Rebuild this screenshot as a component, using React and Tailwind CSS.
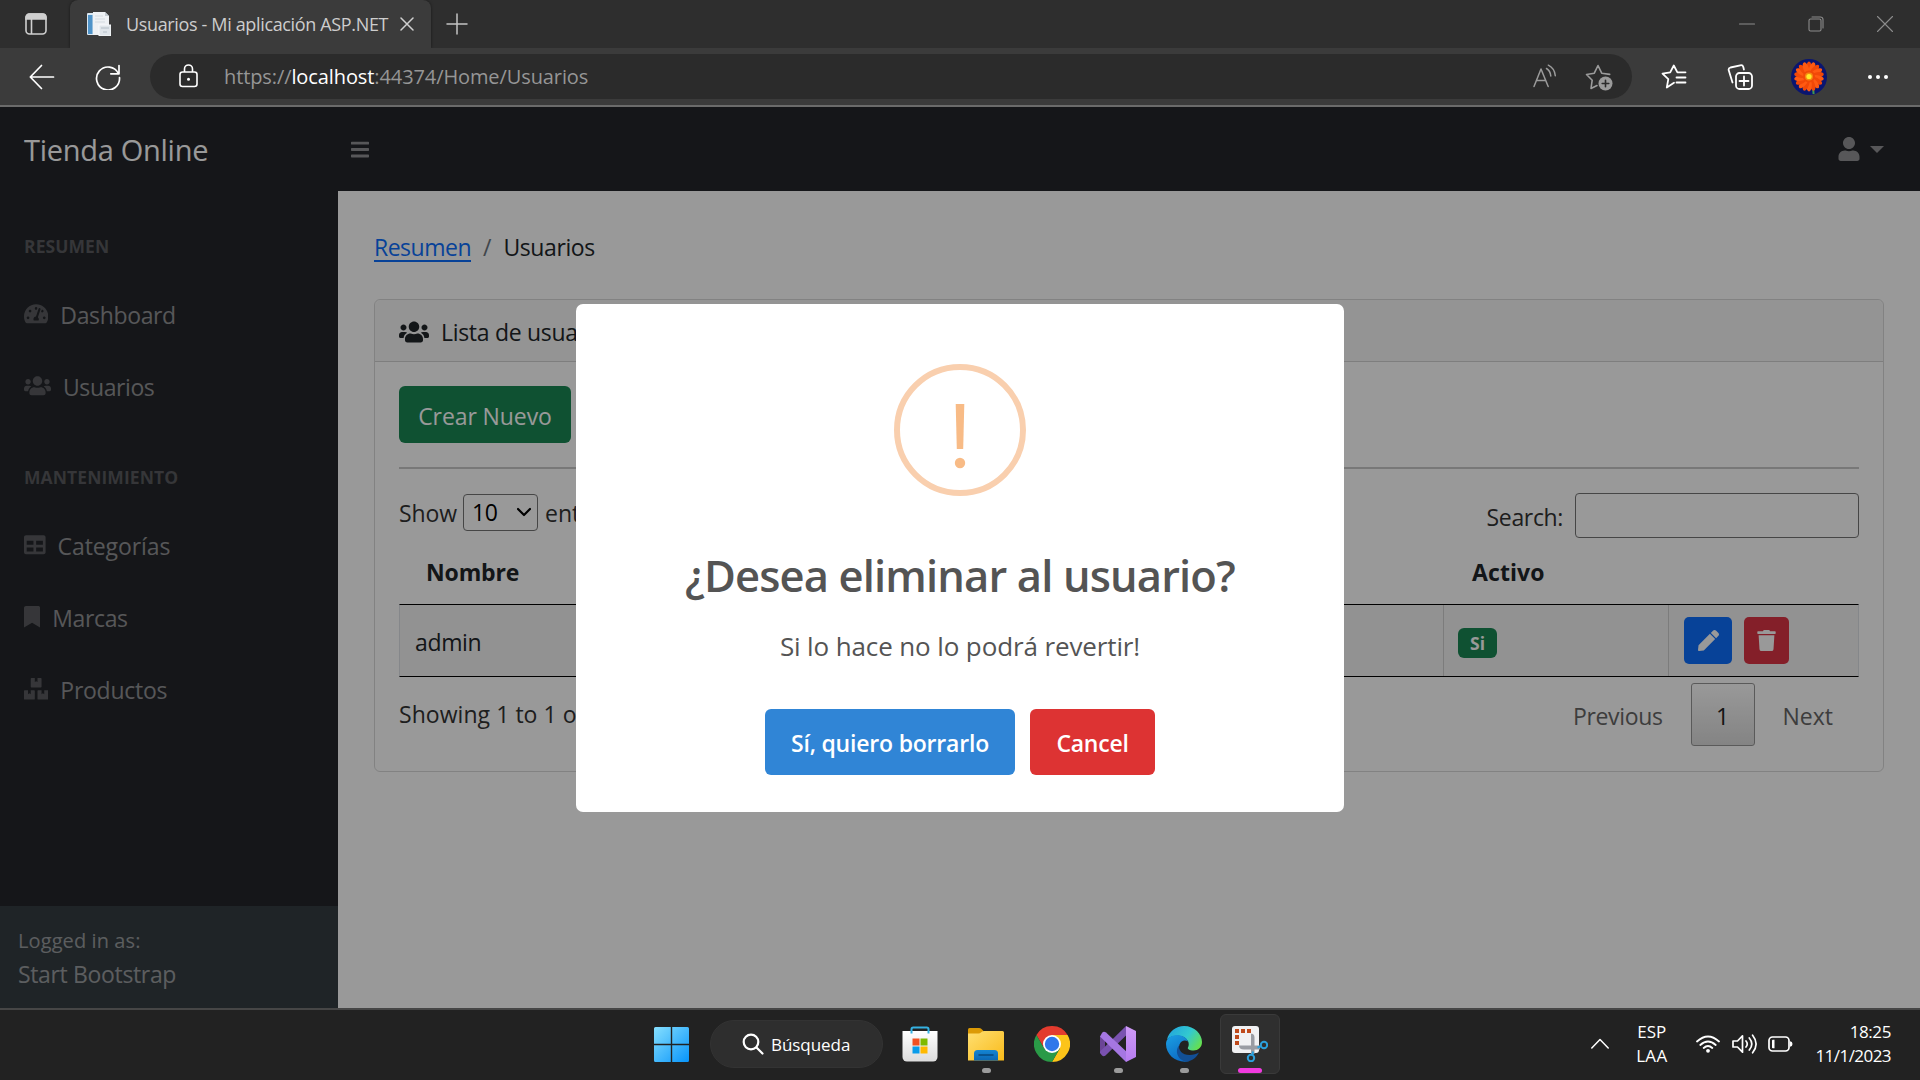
import {
  FaTachometerAlt,
  FaUsers,
  FaTable,
  FaBookmark,
  FaBoxes,
  FaBars,
  FaUser,
  FaTrash,
  FaPen,
} from 'react-icons/fa';

function Stroke({ className, children, w = 1.6, size = 24 }) {
  return (
    <svg
      viewBox={`0 0 ${size} ${size}`}
      className={className}
      fill="none"
      stroke="currentColor"
      strokeWidth={w}
      strokeLinecap="round"
      strokeLinejoin="round"
    >
      {children}
    </svg>
  );
}

function TabBar() {
  return (
    <div className="flex h-12 bg-[#2e2e2e]">
      <div className="flex w-[70px] items-center pl-[25px]">
        <svg viewBox="0 0 22 22" className="size-[22px] text-[#cfcfcf]" fill="none" stroke="currentColor" strokeWidth="1.6">
          <rect x="1" y="1" width="20" height="20" rx="3.5" />
          <path d="M1 6V4.5C1 2.5 2.5 1 4.5 1h13C19.5 1 21 2.5 21 4.500V6z" fill="currentColor" />
          <path d="M6.500 6v15" />
        </svg>
      </div>
      <div className="flex w-[361px] items-center rounded-t-lg bg-[#3b3b3b] pl-[17px] shadow-[0_0_3px_rgba(0,0,0,0.5)]">
        <svg viewBox="0 0 24 24" className="size-6 shrink-0">
          <rect x="0" y="1" width="9" height="22" rx="1" fill="#dbe7f1" />
          <rect x="1" y="3" width="4.500" height="19" fill="#4f93c8" />
          <path d="M6 0h12l4 4v19H6z" fill="#eef1f4" />
          <path d="M18 0l4 4h-4z" fill="#c3cbd2" />
          <path d="M8 4h8M8 7h10M8 10h10" stroke="#d3dae0" />
          <rect x="12" y="13" width="12" height="11" fill="#dfe5ea" stroke="#f8fafb" strokeWidth="1" />
          <path d="M14 16h8M16 20h4" stroke="#b4bec7" />
        </svg>
        <span className="ml-[15px] w-[270px] whitespace-nowrap text-[18px] tracking-[-0.35px] text-[#cdcdcd]">
          Usuarios - Mi aplicación ASP.NET
        </span>
        <Stroke className="ml-[4px] size-[14px] shrink-0 text-[#d0d0d0]" w={1.5} size={14}>
          <path d="M1 1l12 12M13 1L1 13" />
        </Stroke>
      </div>
      <div className="flex flex-1 items-center pl-[15px]">
        <Stroke className="size-[22px] text-[#c4c4c4]" w={1.5} size={22}>
          <path d="M11 1v20M1 11h20" />
        </Stroke>
      </div>
      <div className="flex items-center gap-[53px] pr-[27px] text-[#8c8c8c]">
        <Stroke className="size-4" w={1.1} size={16}>
          <path d="M0.500 8h15" />
        </Stroke>
        <Stroke className="size-4" w={1.1} size={16}>
          <rect x="1" y="3" width="12" height="12" rx="1.500" />
          <path d="M4 1h8.500a2.500 2.500 0 0 1 2.500 2.500V12" />
        </Stroke>
        <Stroke className="size-4" w={1.1} size={16}>
          <path d="M0.500 0.500l15 15M15.500 0.500l-15 15" />
        </Stroke>
      </div>
    </div>
  );
}

const PETALS = Array.from({ length: 18 }, (_, i) => i * 20);

function Avatar() {
  return (
    <svg viewBox="0 0 36 36" className="size-9">
      <circle cx="18" cy="18" r="18" fill="#0a1570" />
      <path d="M22 28l.6 7" stroke="#3f9a4e" strokeWidth="2" />
      {PETALS.map((a) => (
        <ellipse key={a} cx="18" cy="9" rx="2.800" ry="6.500" fill={a % 40 ? '#ff5a12' : '#f24808'} transform={`rotate(${a} 18 17.500)`} />
      ))}
      <circle cx="18" cy="17.500" r="6" fill="#f04a08" />
      <circle cx="18" cy="17.500" r="4" fill="#f58a10" />
      <circle cx="18" cy="17.500" r="2.600" fill="#ffe92a" />
    </svg>
  );
}

function Toolbar() {
  return (
    <div className="flex h-[59px] items-center border-b-2 border-[#6b6b6b] bg-[#3b3b3b] text-white">
      <Stroke className="ml-[29px] size-[26px]" w={1.7} size={26}>
        <path d="M24.500 13H1.500M12.500 1.500L1.300 13l11.200 11.500" />
      </Stroke>
      <Stroke className="ml-[40px] size-[26px]" w={1.7} size={26}>
        <path d="M23.400 9.500A11.500 11.500 0 1 0 24.500 13.500M24 1.500v8.300h-8.200" />
      </Stroke>
      <div className="ml-[29px] flex h-[45px] w-[1482px] items-center rounded-full bg-[#2b2b2b]">
        <svg viewBox="0 0 19 24" className="ml-[29px] -mt-px h-6 w-[19px]" fill="none" stroke="currentColor" strokeWidth="1.600">
          <rect x="1" y="8" width="17" height="14.500" rx="2.500" />
          <path d="M5.500 8V5a4 4 0 0 1 8 0v3" />
          <circle cx="9.500" cy="15.300" r="1.500" fill="currentColor" stroke="none" />
        </svg>
        <span className="ml-[26px] text-[20px] tracking-[-0.1px] text-[#969696]">
          https://<span className="text-white">localhost</span>:44374/Home/Usuarios
        </span>
        <div className="ml-auto flex items-center gap-[27px] pr-[21px] text-[#9b9b9b]">
          <Stroke className="size-[26px]" w={1.5} size={26}>
            <path d="M2 22.500L9 5l7.200 17.500M4.500 16.500h9.200M14.500 4.500c2.500 1.500 4 4 4.300 7.500M16.300 1.200c4 2 6.500 5.500 7 10.500" />
          </Stroke>
          <svg viewBox="0 0 28 28" className="-mr-[2px] size-7" fill="none" stroke="currentColor" strokeWidth="1.600" strokeLinejoin="round" strokeLinecap="round">
            <path d="M12 22.500l-6 3 1.200-8.300L1.500 11.500 9.300 10.200 13 2.500l3.700 7.700 8 1.200" />
            <circle cx="20.500" cy="20.500" r="7" fill="currentColor" stroke="none" />
            <path d="M20.500 17.200v6.600M17.200 20.500h6.600" stroke="#2b2b2b" />
          </svg>
        </div>
      </div>
      <Stroke className="ml-[29px] size-[26px]" w={1.8} size={26}>
        <path d="M13 18.800L5.800 23.500l1.500-8.300L1.500 9.600l7.700-1.300L12.800 1.500l3.600 6.800h8.100M15.500 13.500h9M15.500 18.500h9" />
      </Stroke>
      <Stroke className="ml-[40px] size-[26px]" w={1.8} size={26}>
        <path d="M5.500 18.500L1.800 6.500C1.300 5 2 4 3.500 3.500l9.800-2.200c1.500-.3 2.600.3 3 1.700l.6 2.500" />
        <rect x="9" y="9" width="16" height="16" rx="3.500" />
        <path d="M17 12.500v9M12.500 17h9" />
      </Stroke>
      <div className="ml-[38px]">
        <Avatar />
      </div>
      <svg viewBox="0 0 20 4" className="ml-[41px] h-1 w-5" fill="currentColor">
        <circle cx="2" cy="2" r="2" />
        <circle cx="10" cy="2" r="2" />
        <circle cx="18" cy="2" r="2" />
      </svg>
    </div>
  );
}

function NavLink({ icon: Icon, iconClass, label, labelClass }) {
  return (
    <a className="flex h-[72px] items-center pl-6 text-[23px] text-white/50">
      <Icon className={`h-[21.6px] text-white/25 ${iconClass}`} />
      <span className={`ml-3 pt-[3px] ${labelClass}`}>{label}</span>
    </a>
  );
}

function Heading({ children }) {
  return (
    <div className="h-[87px] pl-6 pt-[42px] text-[17.5px] font-bold leading-[27px] tracking-[0.08px] text-white/25">
      {children}
    </div>
  );
}

function Sidebar() {
  return (
    <aside className="flex w-[338px] shrink-0 flex-col bg-[#23252a]">
      <nav className="flex-1">
        <Heading>RESUMEN</Heading>
        <NavLink icon={FaTachometerAlt} iconClass="w-[24.3px]" label="Dashboard" labelClass="tracking-[-0.35px]" />
        <NavLink icon={FaUsers} iconClass="w-[27px]" label="Usuarios" labelClass="tracking-[-0.4px]" />
        <Heading>MANTENIMIENTO</Heading>
        <NavLink icon={FaTable} iconClass="w-[21.6px]" label="Categorías" labelClass="tracking-[-0.1px]" />
        <NavLink icon={FaBookmark} iconClass="w-[16.2px]" label="Marcas" labelClass="tracking-[-0.35px]" />
        <NavLink icon={FaBoxes} iconClass="w-[24.3px]" label="Productos" labelClass="tracking-[-0.25px]" />
      </nav>
      <div className="h-[102px] bg-[#353c41] pl-[18px] pt-[19px] text-white/50">
        <div className="text-[20px] leading-[32px] tracking-[0.1px]">Logged in as:</div>
        <div className="text-[23px] leading-[35px] tracking-[-0.35px]">Start Bootstrap</div>
      </div>
    </aside>
  );
}

function UsersCard() {
  return (
    <section className="h-[473px] rounded-md border border-black/15 text-[23px] text-[#212529]">
      <header className="flex h-[62px] items-center rounded-t-md border-b border-black/15 bg-black/[0.03] pl-6 pt-[2px]">
        <FaUsers className="h-6 w-[30px]" />
        <span className="ml-3 pt-[2px] tracking-[-0.3px]">Lista de usuarios</span>
      </header>
      <div className="px-6 pt-6">
        <button className="block h-[57px] w-[172px] rounded-md bg-[#198754] pt-[3px] tracking-[-0.1px] text-white">
          Crear Nuevo
        </button>
        <hr className="mt-6 border-0 border-t-2 border-[#c8c8c9]" />
        <div className="mt-[23px] flex h-[46px] justify-between text-[#333333]">
          <div className="flex h-[42px] items-center">
            <span className="pt-px tracking-[-0.1px]">Show</span>
            <div className="-mt-[2px] ml-[6px] flex h-[37px] w-[75px] items-center rounded border border-[#767676] pl-2 text-black">
              <span className="flex-1 pt-px tracking-[-0.5px]">10</span>
              <Stroke className="mr-[6px] h-[14px] w-[14px]" w={2.2} size={14}>
                <path d="M1 4l6 6 6-6" />
              </Stroke>
            </div>
            <span className="ml-[7px] pt-px">entries</span>
          </div>
          <div className="flex h-[46px] items-center">
            <span className="mt-[5px] tracking-[-0.35px]">Search:</span>
            <div className="ml-3 h-[45px] w-[284px] rounded border border-[#767676]" />
          </div>
        </div>
        <div className="grid h-[66px] grid-cols-[1fr_225px_190px] items-center font-bold">
          <span className="pl-[27px] pt-[3px] tracking-[-0.15px]">Nombre</span>
          <span className="pl-[28px] pt-[3px] tracking-[0.1px]">Activo</span>
        </div>
        <div className="grid h-[73px] grid-cols-[1fr_225px_190px] border border-x-[#dee2e6] border-y-black bg-black/[0.045]">
          <div className="flex items-center pl-[15px] pt-[3px] tracking-[-0.35px]">admin</div>
          <div className="flex items-center border-l border-black/15 pl-[14px]">
            <span className="mt-[5px] flex h-[30px] w-[39px] items-center justify-center rounded-md bg-[#198754] pt-px text-[17.5px] font-bold text-white">
              Si
            </span>
          </div>
          <div className="flex items-center gap-3 border-l border-black/15 pl-[15px] text-white">
            <button className="flex h-[47px] w-12 items-center justify-center rounded-[5px] bg-[#0d6efd]">
              <FaPen className="size-[21px]" />
            </button>
            <button className="flex h-[47px] w-[45px] items-center justify-center rounded-[5px] bg-[#dc3545]">
              <FaTrash className="h-[21px] w-[19px]" />
            </button>
          </div>
        </div>
        <div className="flex items-start justify-between text-[#333333]">
          <span className="pt-[20px] tracking-[0.05px]">Showing 1 to 1 of 1 entries</span>
          <div className="mt-[6px] flex h-[63px] items-center text-[#666666]">
            <span className="pt-[4px] tracking-[-0.35px]">Previous</span>
            <span className="ml-[28px] flex h-[63px] w-16 items-center justify-center rounded-[3px] border border-[#979797] bg-gradient-to-b from-white to-[#dcdcdc] pt-[4px] text-[#222222]">
              1
            </span>
            <span className="ml-[28px] mr-[26px] pt-[4px]">Next</span>
          </div>
        </div>
      </div>
    </section>
  );
}

function Modal() {
  return (
    <div className="flex h-[508px] w-[768px] flex-col items-center rounded-[7px] bg-white text-[#545454]">
      <svg viewBox="0 0 132 132" className="mt-[60px] size-[132px]">
        <circle cx="66" cy="66" r="63" fill="none" stroke="#f9cfae" strokeWidth="6" />
        <path d="M61.700 40h8.600l-1.100 45h-6.400z" fill="#f8bb86" />
        <circle cx="66" cy="99" r="5.200" fill="#f8bb86" />
      </svg>
      <h2 className="mt-[47px] whitespace-nowrap text-[43.5px] font-semibold leading-[66px] tracking-[-0.85px]">
        ¿Desea eliminar al usuario?
      </h2>
      <p className="mt-[17px] text-[26px] leading-[40px] tracking-[-0.12px]">Si lo hace no lo podrá revertir!</p>
      <div className="mt-[43px] flex gap-[15px] text-[23px] font-semibold text-white">
        <button className="h-[66px] w-[250px] rounded-md bg-[#3085d6] pt-[4px] tracking-[-0.2px]">Sí, quiero borrarlo</button>
        <button className="h-[66px] w-[125px] rounded-md bg-[#dd3333] pt-[4px] tracking-[-0.25px]">Cancel</button>
      </div>
    </div>
  );
}

function Page() {
  return (
    <div className="relative flex h-[901px] flex-col">
      <header className="flex h-[84px] items-center bg-[#23252a]">
        <span className="w-[351px] pl-6 pt-[2px] text-[29px] tracking-[-0.28px] text-white">Tienda Online</span>
        <FaBars className="h-[21px] w-[18px] text-white/50" />
        <FaUser className="ml-auto h-6 w-[22px] text-white/50" />
        <span className="ml-[10px] mr-[36px] border-x-[7px] border-t-[7px] border-x-transparent border-t-white/50" />
      </header>
      <div className="flex flex-1">
        <Sidebar />
        <main className="min-w-0 flex-1 bg-white px-[36px] text-[23px]">
          <div className="flex h-[108px] items-center pt-[4px] text-[#212529]">
            <a className="tracking-[-0.5px] text-[#0d6efd] underline decoration-[1.5px] underline-offset-[4px]">Resumen</a>
            <span className="mx-3 text-[#6c757d]">/</span>
            <span className="tracking-[-0.4px]">Usuarios</span>
          </div>
          <UsersCard />
        </main>
      </div>
      <div className="absolute inset-0 flex items-center justify-center bg-black/40">
        <Modal />
      </div>
    </div>
  );
}

function WindowsIcon() {
  return (
    <svg viewBox="0 0 35 35" className="size-[35px]">
      <defs>
        <linearGradient id="win" x1="0" y1="0" x2="1" y2="1">
          <stop offset="0" stopColor="#86dffe" />
          <stop offset="1" stopColor="#0794fa" />
        </linearGradient>
      </defs>
      <path
        d="M1.500 0H16.800V16.800H0V1.500Q0 0 1.500 0zM18.200 0H33.500Q35 0 35 1.500V16.800H18.200zM0 18.200H16.800V35H1.500Q0 35 0 33.500zM18.200 18.200H35V33.500Q35 35 33.500 35H18.200z"
        fill="url(#win)"
      />
    </svg>
  );
}

function StoreIcon() {
  return (
    <svg viewBox="0 0 36 36" className="size-9">
      <defs>
        <linearGradient id="bag" x1="0" y1="0" x2="0" y2="1">
          <stop offset="0" stopColor="#ffffff" />
          <stop offset="1" stopColor="#dcdcdc" />
        </linearGradient>
      </defs>
      <path d="M0.500 5h35v26a4.500 4.500 0 0 1-4.500 4.500H5A4.500 4.500 0 0 1 .5 31z" fill="url(#bag)" />
      <path d="M9.500 7.500V3.200Q9.500 1.500 11.200 1.500H24.800Q26.500 1.500 26.500 3.200V7.500" fill="none" stroke="#35b1e2" strokeWidth="2" />
      <path d="M10.500 12.500h7v7h-7z" fill="#f25022" />
      <path d="M18.500 12.500h7v7h-7z" fill="#7fba00" />
      <path d="M10.500 20.500h7v7h-7z" fill="#0a9cea" />
      <path d="M18.500 20.500h7v7h-7z" fill="#ffb900" />
    </svg>
  );
}

function FolderIcon() {
  return (
    <svg viewBox="0 0 36 36" className="size-9">
      <defs>
        <linearGradient id="fold" x1="0" y1="0" x2="1" y2="1">
          <stop offset="0" stopColor="#ffdf72" />
          <stop offset="1" stopColor="#f9bb1a" />
        </linearGradient>
        <linearGradient id="foldblue" x1="0" y1="0" x2="0" y2="1">
          <stop offset="0" stopColor="#1485d3" />
          <stop offset="1" stopColor="#0b67b4" />
        </linearGradient>
      </defs>
      <path d="M0 3.500Q0 2 1.500 2H11q1.500 0 2.500 1l2 2v4H0z" fill="#dc9a06" />
      <path d="M0 7.500H10.500q1.500 0 2.500-1l1.200-1q.8-.5 1.800-.5H34.500Q36 5 36 6.500V34.500H0z" fill="url(#fold)" />
      <path d="M6 34.500V27.500Q6 24 9.500 24h17Q30 24 30 27.500V34.500z" fill="url(#foldblue)" />
      <path d="M11 29h14" stroke="#07487f" strokeWidth="1.500" strokeLinecap="round" />
    </svg>
  );
}

function ChromeIcon() {
  return (
    <svg viewBox="0 0 36 36" className="size-9">
      <path d="M18 9H33.590A18 18 0 0 0 2.410 9L10.210 22.500z" fill="#e33b2e" />
      <path d="M25.790 22.500L18 36A18 18 0 0 0 33.590 9H18z" fill="#fcc419" />
      <path d="M10.210 22.500L2.410 9A18 18 0 0 0 18 36l7.790-13.500z" fill="#2a9a47" />
      <circle cx="18" cy="18" r="9" fill="#ffffff" />
      <circle cx="18" cy="18" r="7.200" fill="#2f77ea" />
    </svg>
  );
}

function VisualStudioIcon() {
  return (
    <svg viewBox="0 0 36 36" className="size-9">
      <defs>
        <linearGradient id="vs" x1="0" y1="0" x2="0" y2="1">
          <stop offset="0" stopColor="#cf9bf6" />
          <stop offset="1" stopColor="#b67cf0" />
        </linearGradient>
      </defs>
      <path d="M0 10.500L5 8v20l-5-2.500z" fill="#6b4596" />
      <path d="M0 25.500L26 0v9.500L5.500 29.500Q3.500 31 2 29.500L0 27z" fill="#7a52b0" />
      <path d="M0 10.500L2 7Q3.500 5 6 6.500L29 28 26 36z" fill="#a577e2" />
      <path d="M26 0l10 5v26l-10 5z" fill="url(#vs)" />
    </svg>
  );
}

function EdgeIcon() {
  return (
    <svg viewBox="0 0 36 36" className="size-9">
      <defs>
        <linearGradient id="edgeTop" x1="0" y1="0.200" x2="1" y2="0.700">
          <stop offset="0" stopColor="#21a5dd" />
          <stop offset="0.550" stopColor="#33c9cf" />
          <stop offset="1" stopColor="#66e04e" />
        </linearGradient>
        <linearGradient id="edgeLeft" x1="0" y1="0" x2="0.500" y2="1">
          <stop offset="0" stopColor="#1ba0e4" />
          <stop offset="1" stopColor="#0d6cc4" />
        </linearGradient>
      </defs>
      <path d="M1 13.500C3 5.500 10 0 18 0c10.500 0 18 8 18 16 0 5.500-4 8.500-8.500 8.500-4 0-6.500-1.500-5.500-3 2-3.500.5-10-7.500-11.500C9 9 3.500 10.500 1 13.500z" fill="url(#edgeTop)" />
      <path d="M0 18C0 12.500 5 9 11 9c5.500 0 10 3 11 6.500-3-2-7-1-8.500 3-2.500 7 3 14.500 10 16.500C12 38 0 30 0 18z" fill="url(#edgeLeft)" />
      <path d="M13.300 19c-1.500 5 3.200 10 10.200 10 4 0 7-1 9.500-2.500C30.500 31.500 26 35 21 35.500 12 35 8 25 13.300 19z" fill="#124f96" />
    </svg>
  );
}

function SnipIcon() {
  return (
    <svg viewBox="0 0 36 36" className="size-9">
      <rect x="0" y="0" width="27" height="27" rx="3" fill="#f1f1f3" />
      <path
        d="M3 3h4v4H3zM9 3h4v4H9zM15 3h4v4h-4zM3 9h4v4H3zM3 15h4v4H3z"
        fill="#c04a1c"
      />
      <path d="M18.500 7.500q4 0 4 4V28h-3.500V7.500zM7 19.500H28v4H12q-5 0-5-4z" fill="#9a9ca3" />
      <circle cx="32" cy="19" r="3.200" fill="none" stroke="#2ba0dc" strokeWidth="2" />
      <circle cx="19" cy="32" r="3.200" fill="none" stroke="#2ba0dc" strokeWidth="2" />
      <path d="M25.500 21.500l4-1.500M20.500 29l.5-3.500" stroke="#2ba0dc" strokeWidth="2" />
    </svg>
  );
}

function TaskIcon({ children, bar, active }) {
  return (
    <div
      className={
        active
          ? 'flex h-[60px] w-[60px] flex-col items-center rounded-md border border-[#3a3a3a] bg-[#2f2f2f] pt-[11px]'
          : 'flex h-[60px] w-[60px] flex-col items-center pt-[12px]'
      }
    >
      {children}
      {bar && <span className={`mt-[6px] h-[5px] rounded-full ${bar}`} />}
    </div>
  );
}

function Taskbar() {
  return (
    <footer className="grid h-[72px] grid-cols-[1fr_640px_1fr] border-t-2 border-[#464646] bg-[#222222] text-white">
      <div />
      <div className="flex items-start pt-[4px]">
        <div className="pl-[14px] pt-[13px]">
          <WindowsIcon />
        </div>
        <div className="ml-[21px] mt-[6px] flex h-12 w-[173px] items-center rounded-full border border-[#333333] bg-[#2e2e2e] pl-[31px]">
          <Stroke className="size-[22px]" w={2.2} size={22}>
            <circle cx="9" cy="9" r="7.300" />
            <path d="M14.500 14.500l6 6" />
          </Stroke>
          <span className="ml-[7px] pt-px text-[17px] tracking-[-0.05px]">Búsqueda</span>
        </div>
        <div className="ml-[7px] flex gap-[6px]">
          <TaskIcon>
            <StoreIcon />
          </TaskIcon>
          <TaskIcon bar="w-[9px] bg-[#9b9b9b]">
            <FolderIcon />
          </TaskIcon>
          <TaskIcon>
            <ChromeIcon />
          </TaskIcon>
          <TaskIcon bar="w-[9px] bg-[#9b9b9b]">
            <VisualStudioIcon />
          </TaskIcon>
          <TaskIcon bar="w-[9px] bg-[#9b9b9b]">
            <EdgeIcon />
          </TaskIcon>
          <TaskIcon active bar="w-6 bg-[#f13bdf]">
            <SnipIcon />
          </TaskIcon>
        </div>
      </div>
      <div className="flex items-center justify-end pb-[3px] pr-[29px] text-[17px] leading-[23.500px]">
        <Stroke className="mr-[27px] h-[18px] w-[18px]" w={1.5} size={18}>
          <path d="M0.800 13L9 4.500 17.200 13" />
        </Stroke>
        <div className="text-center">
          <div>ESP</div>
          <div className="tracking-[0.3px]">LAA</div>
        </div>
        <svg viewBox="0 0 24 18" className="ml-[29px] h-[18px] w-6" fill="none" stroke="currentColor" strokeWidth="1.800" strokeLinecap="round">
          <path d="M1 6.500Q12-3.500 23 6.500M4.300 10Q12 3 19.700 10M7.700 13Q12 9 16.300 13" />
          <circle cx="12" cy="15.800" r="1.900" fill="currentColor" stroke="none" />
        </svg>
        <svg viewBox="0 0 25 20" className="ml-[12px] h-5 w-[25px]" fill="none" stroke="currentColor" strokeWidth="1.700" strokeLinecap="round" strokeLinejoin="round">
          <path d="M1 7h4.500l5-5.200v16.400l-5-5.200H1zM14 7q2.500 3 0 6M17.300 4q5 6 0 12M20.600 1.200q7 8.800 0 17.600" />
        </svg>
        <svg viewBox="0 0 25 16" className="ml-[11px] h-4 w-[25px]" fill="none" stroke="currentColor" strokeWidth="1.700">
          <rect x="1" y="1" width="20" height="14" rx="3.500" />
          <path d="M4 4.500Q4 3.700 4.800 3.700H6.500v8.600H4.800Q4 12.300 4 11.500z" fill="currentColor" stroke="none" />
          <path d="M22 5.200q2.500.3 2.500 2.800T22 10.800z" fill="currentColor" stroke="none" />
        </svg>
        <div className="ml-[22px] text-right">
          <div className="tracking-[-0.4px]">18:25</div>
          <div className="tracking-[-0.55px]">11/1/2023</div>
        </div>
      </div>
    </footer>
  );
}

export default function App() {
  return (
    <div className="flex h-[1080px] w-[1920px] flex-col overflow-hidden font-['Open_Sans',sans-serif]">
      <TabBar />
      <Toolbar />
      <Page />
      <Taskbar />
    </div>
  );
}
